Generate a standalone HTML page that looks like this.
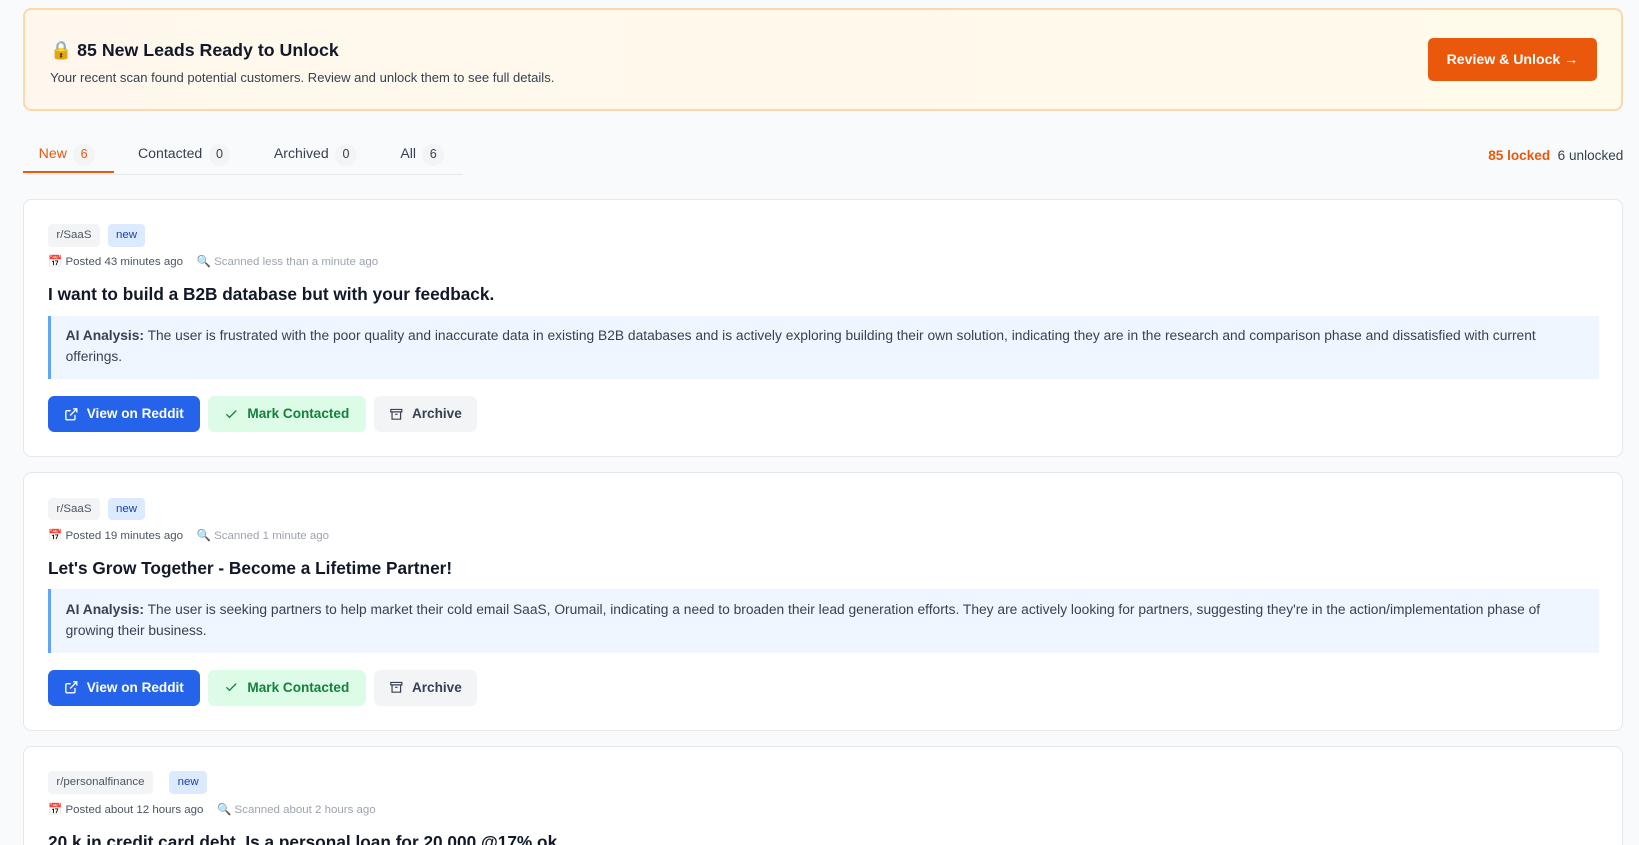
<!DOCTYPE html>
<html><head><meta charset="utf-8"><style>
*{box-sizing:border-box;margin:0;padding:0}
html,body{width:1639px;height:845px;overflow:hidden;background:#f9fafb}
#w{zoom:1.0453;width:1568px;height:808px;overflow:hidden;position:relative;font-family:"Liberation Sans",sans-serif;color:#111827}
.banner{position:absolute;left:22px;top:8px;width:1531px;height:98px;border:2px solid #fed7aa;border-radius:8px;background:linear-gradient(90deg,#fff7ed,#fffbeb)}
.banner h2{position:absolute;left:24px;top:28px;font-size:17px;font-weight:600;color:#111827}
.banner p{position:absolute;left:24px;top:57px;font-size:12.5px;color:#374151}
.btnU{position:absolute;left:1342px;top:26px;width:162px;height:42px;background:#ea580c;border-radius:5px;color:#fff;font-size:13.5px;font-weight:bold;text-align:center;line-height:42px}
.tabs{position:absolute;left:22px;top:130px;width:421px;height:37px;border-bottom:1px solid #e5e7eb}
.tab{position:absolute;top:8px;font-size:13.5px;color:#374151}
.cnt{display:inline-block;width:21px;height:21px;border-radius:50%;background:#f3f4f6;text-align:center;line-height:21px;font-size:12px;margin-left:6px;color:#374151}
.ul{position:absolute;left:0;top:34px;width:87px;height:2px;background:#ea580c}
.stat{position:absolute;right:15px;top:142px;font-size:13px;color:#374151}
.card{position:absolute;left:22px;width:1531px;background:#fff;border:1px solid #e5e7eb;border-radius:8px}
.tag{position:absolute;top:23px;height:22px;line-height:22px;padding:0 8px;font-size:11px;border-radius:4px}
.t1{background:#f3f4f6;color:#4b5563;left:23px}
.t2{background:#dbeafe;color:#1e40af}
.meta{position:absolute;left:23px;top:52px;font-size:11px;color:#4b5563}
.meta .s{color:#9ca3af;margin-left:10px}
.ti{position:absolute;left:23px;top:81px;font-size:16.5px;font-weight:600;color:#111827}
.ai{position:absolute;left:23px;top:111px;width:1484px;height:61px;background:#eff6ff;border-left:3px solid #60a5fa;padding:10px 13px 0 14px;font-size:13.2px;line-height:20px;color:#374151}
.b{position:absolute;top:188px;height:34px;border-radius:6px;font-size:13px;font-weight:600;line-height:34px;display:flex;align-items:center;justify-content:center;gap:8px}
.b1{left:23px;width:145px;background:#2563eb;color:#fff}
.b2{left:176px;width:151px;background:#dcfce7;color:#15803d}
.b3{left:335px;width:98px;background:#f3f4f6;color:#374151}
</style></head><body><div id="w">
<div class="banner"><h2>🔒 85 New Leads Ready to Unlock</h2><p>Your recent scan found potential customers. Review and unlock them to see full details.</p><div class="btnU">Review &amp; Unlock →</div></div>
<div class="tabs">
<div class="tab" style="left:15px;color:#ea580c">New<span class="cnt" style="color:#ea580c">6</span></div>
<div class="tab" style="left:110px">Contacted<span class="cnt">0</span></div>
<div class="tab" style="left:240px">Archived<span class="cnt">0</span></div>
<div class="tab" style="left:361px">All<span class="cnt">6</span></div>
<div class="ul"></div></div>
<div class="stat"><span style="color:#ea580c;font-weight:600">85 locked</span>&nbsp; 6 unlocked</div>

<div class="card" style="top:190px;height:247px">
<span class="tag t1">r/SaaS</span><span class="tag t2" style="left:80px">new</span>
<div class="meta">📅 Posted 43 minutes ago <span class="s">🔍 Scanned less than a minute ago</span></div>
<div class="ti">I want to build a B2B database but with your feedback.</div>
<div class="ai"><b>AI Analysis:</b> The user is frustrated with the poor quality and inaccurate data in existing B2B databases and is actively exploring building their own solution, indicating they are in the research and comparison phase and dissatisfied with current<br>offerings.</div>
<div class="b b1"><svg width="14" height="14" viewBox="0 0 24 24" fill="none" stroke="#fff" stroke-width="2.2"><path d="M18 13v6a2 2 0 0 1-2 2H5a2 2 0 0 1-2-2V8a2 2 0 0 1 2-2h6M15 3h6v6M10 14L21 3"/></svg>View on Reddit</div>
<div class="b b2"><svg width="14" height="14" viewBox="0 0 24 24" fill="none" stroke="#15803d" stroke-width="2.2"><path d="M20 6L9 17l-5-5"/></svg>Mark Contacted</div>
<div class="b b3"><svg width="14" height="14" viewBox="0 0 24 24" fill="none" stroke="#374151" stroke-width="2"><path d="M3 4h18v4H3zM5 8v12h14V8M10 12h4"/></svg>Archive</div>
</div>

<div class="card" style="top:452px;height:247px">
<span class="tag t1">r/SaaS</span><span class="tag t2" style="left:80px">new</span>
<div class="meta">📅 Posted 19 minutes ago <span class="s">🔍 Scanned 1 minute ago</span></div>
<div class="ti">Let's Grow Together - Become a Lifetime Partner!</div>
<div class="ai"><b>AI Analysis:</b> The user is seeking partners to help market their cold email SaaS, Orumail, indicating a need to broaden their lead generation efforts. They are actively looking for partners, suggesting they're in the action/implementation phase of<br>growing their business.</div>
<div class="b b1"><svg width="14" height="14" viewBox="0 0 24 24" fill="none" stroke="#fff" stroke-width="2.2"><path d="M18 13v6a2 2 0 0 1-2 2H5a2 2 0 0 1-2-2V8a2 2 0 0 1 2-2h6M15 3h6v6M10 14L21 3"/></svg>View on Reddit</div>
<div class="b b2"><svg width="14" height="14" viewBox="0 0 24 24" fill="none" stroke="#15803d" stroke-width="2.2"><path d="M20 6L9 17l-5-5"/></svg>Mark Contacted</div>
<div class="b b3"><svg width="14" height="14" viewBox="0 0 24 24" fill="none" stroke="#374151" stroke-width="2"><path d="M3 4h18v4H3zM5 8v12h14V8M10 12h4"/></svg>Archive</div>
</div>

<div class="card" style="top:714px;height:200px">
<span class="tag t1">r/personalfinance</span><span class="tag t2" style="left:139px">new</span>
<div class="meta">📅 Posted about 12 hours ago <span class="s">🔍 Scanned about 2 hours ago</span></div>
<div class="ti">20 k in credit card debt. Is a personal loan for 20,000 @17% ok</div>
</div>
</div></body></html>
